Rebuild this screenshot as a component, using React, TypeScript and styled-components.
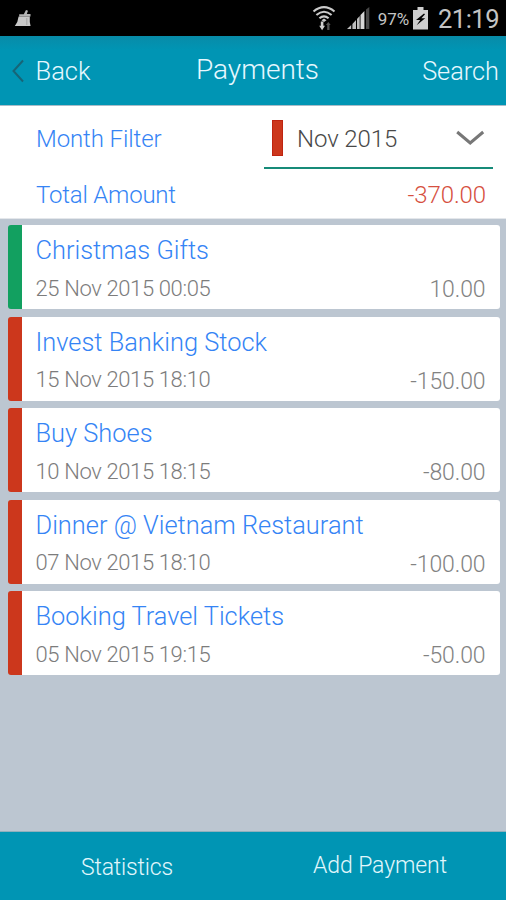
import React from 'react';
import styled, { createGlobalStyle } from 'styled-components';

const GlobalStyle = createGlobalStyle`
  * { box-sizing: border-box; }
  body { margin: 0; background: #bcc6d1; }
`;

const Screen = styled.div`
  display: flex;
  flex-direction: column;
  width: 506px;
  height: 900px;
  overflow: hidden;
  background: #bcc6d1;
  font-family: Roboto, sans-serif;
  font-weight: 300;
`;

const StatusBar = styled.div`
  display: flex;
  flex: none;
  align-items: center;
  height: 36px;
  padding: 0 7px 0 14px;
  background: #000;
  color: #c4c4c4;
  font-weight: 400;
`;

const StatusIcon = styled.svg<{ $gap?: number }>`
  flex: none;
  display: block;
  margin-right: ${p => p.$gap ?? 0}px;
`;

const Spacer = styled.div`
  flex: 1;
`;

const Label = styled.span<{ $size: number; $color?: string; $spacing?: number; $drop?: number }>`
  display: block;
  white-space: nowrap;
  font-size: ${p => p.$size}px;
  line-height: 30px;
  letter-spacing: ${p => p.$spacing ?? 0}px;
  color: ${p => p.$color ?? 'inherit'};
  padding-top: ${p => p.$drop ?? 0}px;
`;

const Header = styled.header`
  display: grid;
  flex: none;
  grid-template-columns: 131px 1fr 125px;
  height: 70px;
  padding: 18px 7px 0 10px;
  background: linear-gradient(#088ba8 0, #0095b4 14px);
  border-bottom: 1px solid #a9bcc8;
  color: #e6f8ff;
`;

const BackButton = styled.div`
  display: flex;
  align-items: flex-start;
  gap: 11.5px;
`;

const BackChevron = styled.svg`
  margin-top: 5px;
`;

const HeaderTitle = styled.div`
  display: flex;
  justify-content: center;
`;

const HeaderAction = styled.div`
  display: flex;
  justify-content: flex-end;
`;

const Summary = styled.section`
  flex: none;
  height: 113px;
  padding: 0 13px 0 36px;
  background: #fff;
  border-bottom: 1px solid #e4e7eb;
`;

const FilterRow = styled.div`
  display: flex;
  justify-content: space-between;
  height: 63px;
`;

const MonthSelect = styled.div`
  display: flex;
  align-items: flex-start;
  width: 229px;
  padding: 14px 8px 0 8px;
  border-bottom: 2px solid #168b79;
`;

const MonthMark = styled.div`
  width: 11px;
  height: 36px;
  margin-right: 14px;
  background: #cc371c;
  border: 1px solid #bf2410;
`;

const TotalRow = styled.div`
  display: flex;
  justify-content: space-between;
  padding: 10px 7px 0 0;
`;

const List = styled.main`
  display: flex;
  flex: 1;
  flex-direction: column;
  gap: 7.4px;
  padding: 6.4px 6.5px 0 7.5px;
`;

const Card = styled.article<{ $income?: boolean }>`
  flex: none;
  height: 84px;
  padding: 10px 14px 0 14px;
  background: #fff;
  border-left: 14px solid ${p => (p.$income ? '#12a060' : '#cc371c')};
  border-radius: 3px;
`;

const CardFooter = styled.div`
  display: flex;
  justify-content: space-between;
  align-items: flex-start;
  margin-top: 8px;
`;

const BottomBar = styled.footer`
  display: grid;
  flex: none;
  grid-template-columns: 1fr 1fr;
  height: 69px;
  padding-top: 18px;
  background: #0095b4;
  border-top: 1px solid #8fb0bd;
  color: #e2f7fc;
`;

const BottomTab = styled.div`
  display: flex;
  justify-content: center;
  padding-left: 1px;
`;

const payments = [
  { name: 'Christmas Gifts', date: '25 Nov 2015 00:05', amount: '10.00', income: true },
  { name: 'Invest Banking Stock', date: '15 Nov 2015 18:10', amount: '-150.00' },
  { name: 'Buy Shoes', date: '10 Nov 2015 18:15', amount: '-80.00' },
  { name: 'Dinner @ Vietnam Restaurant', date: '07 Nov 2015 18:10', amount: '-100.00' },
  { name: 'Booking Travel Tickets', date: '05 Nov 2015 19:15', amount: '-50.00' },
];

const BLUE = '#3584f5';

const BroomIcon = () => (
  <StatusIcon width="18" height="18" viewBox="0 0 18 18">
    <path d="M12 1 14 1.8 12.8 5H16.5v2.6H5.2V5.2H9.8z" fill="#b4b4b4" />
    <path d="M4.6 7.4h11.2V13l.8 4H.8Q4 13 4.6 7.4z" fill="#c8c8c8" />
    <path d="M12.8 9v7" stroke="#949494" strokeWidth=".7" />
  </StatusIcon>
);

const WifiIcon = () => (
  <StatusIcon width="24" height="27" viewBox="0 0 24 27" $gap={10} fill="none">
    <path d="M1.5 6.5Q12-2.2 22.5 6.5M4.4 10Q12 3.5 19.6 10M7.4 13.3Q12 9.4 16.6 13.3" stroke="#cacaca" strokeWidth="2.1" />
    <path d="M12 13.5 14.5 15.2 12 17 9.5 15.2z" fill="#cacaca" />
    <path d="M8.8 16.5h2.6v4.3H13l-2.9 4.5-2.9-4.5h1.6z" fill="#d0d0d0" />
    <path d="M15.2 25v-5h-1.3l2.4-3 2.4 3h-1.2v5z" fill="#555" />
  </StatusIcon>
);

const SignalIcon = () => (
  <StatusIcon width="25" height="23" viewBox="0 0 25 23" $gap={7}>
    <path d="M1 22 5.2 18V22z M6.4 22V17L10 13V22z M11 22V12L13.7 9V22z" fill="#bebebe" />
    <path d="M14.5 22V8L18.4 4V22z" fill="#d6d6d6" />
    <path d="M20 22V2.5L23.3 0V22z" fill="#484848" />
  </StatusIcon>
);

const BatteryIcon = () => (
  <StatusIcon width="15" height="23" viewBox="0 0 15 24" preserveAspectRatio="none" $gap={10}>
    <path d="M4.5 0h6v3H15v20.5H0V3h4.5z" fill="#cecece" />
    <path d="M11 6.8 3 13.6h4.2L3.6 19 12.2 11.8H8.4L12 7.6z" fill="#000" />
  </StatusIcon>
);

const BatteryLevel = styled.div`
  margin-right: 4px;
`;

const DropdownIcon = () => (
  <StatusIcon width="30" height="36" viewBox="0 0 30 36" fill="none">
    <path d="M2.2 12 15.2 23 28.2 12" stroke="#777" strokeWidth="3" />
  </StatusIcon>
);

export default function App() {
  return (
    <Screen>
      <GlobalStyle />
      <StatusBar>
        <BroomIcon />
        <Spacer />
        <WifiIcon />
        <SignalIcon />
        <BatteryLevel><Label $size={17} $spacing={-0.1} $drop={2}>97%</Label></BatteryLevel>
        <BatteryIcon />
        <Label $size={25.5} $spacing={-0.5} $drop={2}>21:19</Label>
      </StatusBar>
      <Header>
        <BackButton>
          <BackChevron width="14" height="24" viewBox="0 0 14 24" fill="none">
            <path d="M13 1.5 3.5 12 13 22.5" stroke="#176577" strokeWidth="2" />
          </BackChevron>
          <Label $size={25.5} $drop={2}>Back</Label>
        </BackButton>
        <HeaderTitle><Label $size={28} $drop={0.5}>Payments</Label></HeaderTitle>
        <HeaderAction><Label $size={25.3} $drop={3}>Search</Label></HeaderAction>
      </Header>
      <Summary>
        <FilterRow>
          <Label $size={24} $spacing={-0.1} $color={BLUE} $drop={18}>Month Filter</Label>
          <MonthSelect>
            <MonthMark />
            <Label $size={24} $spacing={-0.1} $color="#484848" $drop={4}>Nov 2015</Label>
            <Spacer />
            <DropdownIcon />
          </MonthSelect>
        </FilterRow>
        <TotalRow>
          <Label $size={24} $spacing={-0.2} $color={BLUE} $drop={1}>Total Amount</Label>
          <Label $size={24} $spacing={-0.1} $color="#d65040" $drop={1}>-370.00</Label>
        </TotalRow>
      </Summary>
      <List>
        {payments.map(p => (
          <Card key={p.name} $income={p.income}>
            <Label $size={25.4} $color={BLUE}>{p.name}</Label>
            <CardFooter>
              <Label $size={22} $spacing={-0.37} $color="#7c7c7c" $drop={0.6}>{p.date}</Label>
              <Label $size={23} $spacing={-0.1} $color="#828282" $drop={2}>{p.amount}</Label>
            </CardFooter>
          </Card>
        ))}
      </List>
      <BottomBar>
        <BottomTab><Label $size={23} $spacing={-0.15} $drop={3}>Statistics</Label></BottomTab>
        <BottomTab><Label $size={23} $spacing={-0.1} $drop={0.5}>Add Payment</Label></BottomTab>
      </BottomBar>
    </Screen>
  );
}
